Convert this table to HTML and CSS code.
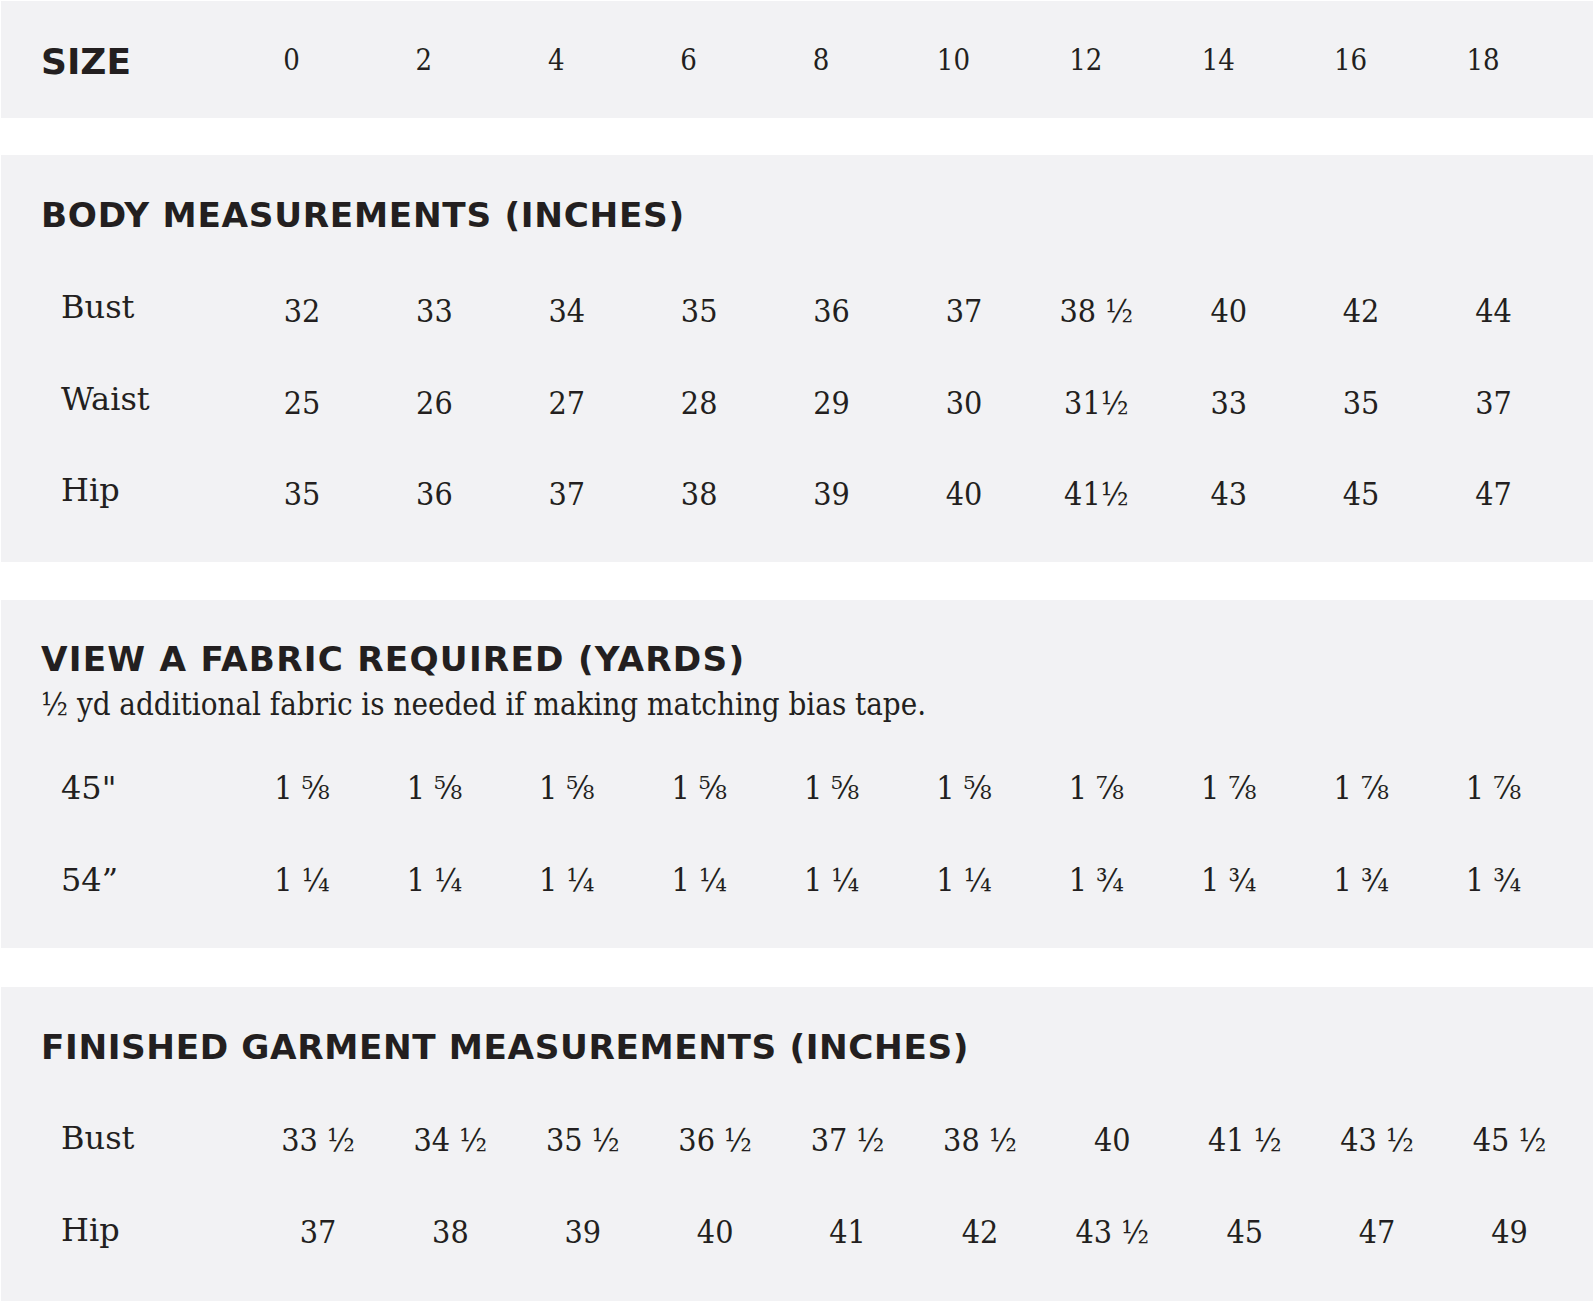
FILE: index.html
```html
<!DOCTYPE html>
<html lang="en">
<head>
<meta charset="utf-8">
<title>Size Chart</title>
<link rel="stylesheet" href="styles.css">
</head>
<body>
<main class="chart">
  <section class="panel panel-size">
    <div class="grid grid-size">
      <div class="size-label">SIZE</div>
      <div class="snum">0</div><div class="snum">2</div><div class="snum">4</div><div class="snum">6</div><div class="snum">8</div>
      <div class="snum">10</div><div class="snum">12</div><div class="snum">14</div><div class="snum">16</div><div class="snum">18</div>
    </div>
  </section>

  <section class="panel panel-body">
    <h2 class="title">BODY MEASUREMENTS (INCHES)</h2>
    <div class="grid grid-body row">
      <div class="label">Bust</div>
      <div class="num low">32</div><div class="num low">33</div><div class="num low">34</div><div class="num low">35</div><div class="num low">36</div>
      <div class="num low">37</div><div class="num low">38 ½</div><div class="num low">40</div><div class="num low">42</div><div class="num low">44</div>
    </div>
    <div class="grid grid-body row">
      <div class="label">Waist</div>
      <div class="num low">25</div><div class="num low">26</div><div class="num low">27</div><div class="num low">28</div><div class="num low">29</div>
      <div class="num low">30</div><div class="num low">31½</div><div class="num low">33</div><div class="num low">35</div><div class="num low">37</div>
    </div>
    <div class="grid grid-body row">
      <div class="label">Hip</div>
      <div class="num low">35</div><div class="num low">36</div><div class="num low">37</div><div class="num low">38</div><div class="num low">39</div>
      <div class="num low">40</div><div class="num low">41½</div><div class="num low">43</div><div class="num low">45</div><div class="num low">47</div>
    </div>
  </section>

  <section class="panel panel-fabric">
    <h2 class="title title-wide">VIEW A FABRIC REQUIRED (YARDS)</h2>
    <p class="note">½ yd additional fabric is needed if making matching bias tape.</p>
    <div class="grid grid-body row">
      <div class="label">45"</div>
      <div class="num">1 ⅝</div><div class="num">1 ⅝</div><div class="num">1 ⅝</div><div class="num">1 ⅝</div><div class="num">1 ⅝</div>
      <div class="num">1 ⅝</div><div class="num">1 ⅞</div><div class="num">1 ⅞</div><div class="num">1 ⅞</div><div class="num">1 ⅞</div>
    </div>
    <div class="grid grid-body row">
      <div class="label">54”</div>
      <div class="num">1 ¼</div><div class="num">1 ¼</div><div class="num">1 ¼</div><div class="num">1 ¼</div><div class="num">1 ¼</div>
      <div class="num">1 ¼</div><div class="num">1 ¾</div><div class="num">1 ¾</div><div class="num">1 ¾</div><div class="num">1 ¾</div>
    </div>
  </section>

  <section class="panel panel-finished">
    <h2 class="title title-tight">FINISHED GARMENT MEASUREMENTS (INCHES)</h2>
    <div class="grid grid-finished row">
      <div class="label">Bust</div>
      <div class="num mid">33 ½</div><div class="num mid">34 ½</div><div class="num mid">35 ½</div><div class="num mid">36 ½</div><div class="num mid">37 ½</div>
      <div class="num mid">38 ½</div><div class="num mid">40</div><div class="num mid">41 ½</div><div class="num mid">43 ½</div><div class="num mid">45 ½</div>
    </div>
    <div class="grid grid-finished row">
      <div class="label">Hip</div>
      <div class="num mid">37</div><div class="num mid">38</div><div class="num mid">39</div><div class="num mid">40</div><div class="num mid">41</div>
      <div class="num mid">42</div><div class="num mid">43 ½</div><div class="num mid">45</div><div class="num mid">47</div><div class="num mid">49</div>
    </div>
  </section>
</main>
</body>
</html>
```

FILE: styles.css
```css
html, body {
  margin: 0;
  padding: 0;
  background: #ffffff;
}

body {
  padding: 1px 1px 0 1px;
  color: #231f20;
  font-family: "DejaVu Serif", "Liberation Serif", serif;
}

.chart {
  display: flex;
  flex-direction: column;
}

.panel {
  background: #f2f2f4;
  padding-left: 40px;
  box-sizing: border-box;
}

.panel-size {
  height: 117px;
  display: flex;
  align-items: center;
  margin-bottom: 37px;
}

.panel-body {
  padding-top: 42.6px;
  padding-bottom: 25.8px;
  margin-bottom: 38px;
}

.panel-fabric {
  padding-top: 41.6px;
  padding-bottom: 22.6px;
  margin-bottom: 39px;
}

.panel-finished {
  padding-top: 42.6px;
  padding-bottom: 25.5px;
}

.title {
  margin: 0;
  font-family: "DejaVu Sans", sans-serif;
  font-weight: 700;
  font-size: 34.3px;
  line-height: 34px;
  letter-spacing: 0.7px;
  white-space: nowrap;
}

.title-wide {
  letter-spacing: 1.2px;
}

.title-tight {
  letter-spacing: 0.6px;
}

.panel-body .title {
  margin-bottom: 30.1px;
}

.panel-fabric .title {
  margin-bottom: 11.8px;
}

.panel-finished .title {
  margin-bottom: 28.9px;
}

.note {
  margin: 0 0 20px 0;
  font-family: "DejaVu Serif Condensed", "DejaVu Serif", serif;
  font-stretch: condensed;
  font-size: 31px;
  line-height: 35px;
  white-space: nowrap;
}

.grid {
  display: grid;
  align-items: center;
}

.grid-size {
  grid-template-columns: 184.3px repeat(10, 132.4px);
}

.grid-body {
  grid-template-columns: 194.8px repeat(10, 132.4px);
}

.grid-finished {
  grid-template-columns: 210.8px repeat(10, 132.4px);
}

.row {
  height: 91.5px;
}

.size-label {
  font-family: "DejaVu Sans", sans-serif;
  font-weight: 700;
  font-size: 36px;
  line-height: 36px;
  margin-top: 4px;
}

.snum {
  font-family: "DejaVu Serif Condensed", "DejaVu Serif", serif;
  font-stretch: condensed;
  font-size: 29px;
  line-height: 32px;
  text-align: center;
  white-space: nowrap;
}

.label {
  padding-left: 20px;
  font-size: 32px;
  line-height: 32px;
  white-space: nowrap;
}

.num {
  font-family: "DejaVu Serif Condensed", "DejaVu Serif", serif;
  font-stretch: condensed;
  font-size: 32px;
  line-height: 32px;
  text-align: center;
  white-space: nowrap;
}

.num.low {
  margin-top: 8px;
}

.num.mid {
  margin-top: 4px;
}
```
